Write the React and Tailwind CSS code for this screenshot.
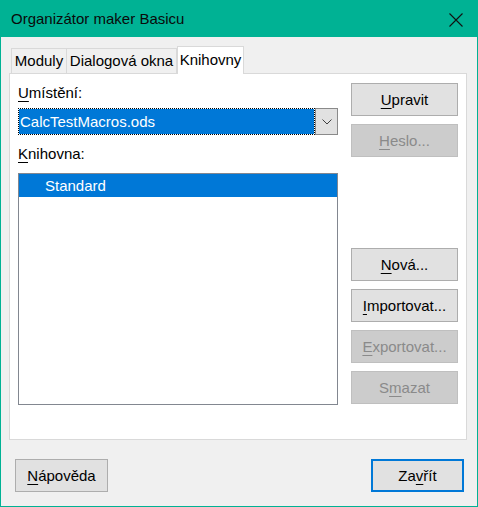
import React from "react";

function Btn({ children, disabled, className = "" }) {
  return (
    <div
      className={
        "h-[33px] flex items-center justify-center border " +
        (disabled
          ? "bg-[#cccccc] border-[#bfbfbf] text-[#8a8a8a] "
          : "bg-[#e1e1e1] border-[#adadad] text-black ") +
        className
      }
    >
      <span className="leading-[20px]">{children}</span>
    </div>
  );
}

const U = ({ children }) => (
  <span className="underline underline-offset-[3px] decoration-1">{children}</span>
);

export default function App() {
  return (
    <div className="w-[478px] h-[507px] border border-[#00b294] bg-[#f0f0f0] flex flex-col overflow-hidden font-['Liberation_Sans',Arial,sans-serif] text-[15px] leading-[20px] text-black">
      <div className="h-[36px] shrink-0 bg-[#00b294] flex items-center justify-between pl-[10px] pr-[14px]">
        <span className="text-[#0a0a0a]">Organizátor maker Basicu</span>
        <svg width="14" height="14" viewBox="0 0 14 14" className="mt-[1px]">
          <path d="M0.5 0.5 L13.5 13.5 M13.5 0.5 L0.5 13.5" stroke="#111" strokeWidth="1.1" fill="none" />
        </svg>
      </div>

      <div className="flex-1 flex flex-col pl-[8px]">
        <div className="mt-[9px] h-[27px] flex items-end pl-[2px]">
          <div className="h-[25px] w-[56px] border-l border-t border-r border-[#d9d9d9] flex items-center justify-center">
            Moduly
          </div>
          <div className="h-[25px] w-[110px] border-t border-r border-[#d9d9d9] flex items-center justify-center">
            Dialogová okna
          </div>
          <div className="relative z-10 h-[28px] -mb-px w-[67px] border-l border-t border-r border-[#d9d9d9] bg-white flex items-center justify-center pb-[2px]">
            Knihovny
          </div>
        </div>

        <div className="w-[458px] h-[367px] border border-[#d9d9d9] bg-white flex pl-[8px] pt-[9px]">
          <div className="w-[320px] flex flex-col">
            <div className="h-[20px]">
              <U>U</U>místění:
            </div>
            <div className="mt-[5px] h-[27px] flex">
              <div className="flex-1 bg-white">
                <div className="h-full bg-[#0078d7] bg-clip-padding border border-dotted border-black text-white flex items-center pl-px">
                  CalcTestMacros.ods
                </div>
              </div>
              <div className="w-[23px] h-full bg-[#e1e1e1] border border-[#8a8a8a] flex items-center justify-center">
                <svg width="10" height="6" viewBox="0 0 10 6">
                  <path d="M0.5 0.5 L5 5 L9.5 0.5" stroke="#404040" strokeWidth="1" fill="none" />
                </svg>
              </div>
            </div>
            <div className="mt-[9px] h-[20px]">
              <U>K</U>nihovna:
            </div>
            <div className="mt-[9px] h-[232px] border border-[#828790] bg-white">
              <div className="h-[23px] bg-[#0078d7] text-white flex items-center pl-[26px]">
                Standard
              </div>
            </div>
          </div>

          <div className="ml-[13px] w-[107px] flex flex-col">
            <Btn>
              <U>U</U>pravit
            </Btn>
            <Btn disabled className="mt-[8px]">
              <U>H</U>eslo...
            </Btn>
            <Btn className="mt-[91px]">
              <U>N</U>ová...
            </Btn>
            <Btn className="mt-[8px]">
              <U>I</U>mportovat...
            </Btn>
            <Btn disabled className="mt-[8px]">
              <U>E</U>xportovat...
            </Btn>
            <Btn disabled className="mt-[8px]">
              S<U>m</U>azat
            </Btn>
          </div>
        </div>

        <div className="mt-[19px] flex justify-between pl-[6px] pr-[13px]">
          <div className="w-[93px] h-[33px] bg-[#e1e1e1] border border-[#adadad] flex items-center justify-center">
            <span>
              <U>N</U>ápověda
            </span>
          </div>
          <div className="w-[93px] h-[33px] bg-[#e1e1e1] border-2 border-[#0078d7] flex items-center justify-center">
            <span>
              Za<U>v</U>řít
            </span>
          </div>
        </div>
      </div>
    </div>
  );
}
